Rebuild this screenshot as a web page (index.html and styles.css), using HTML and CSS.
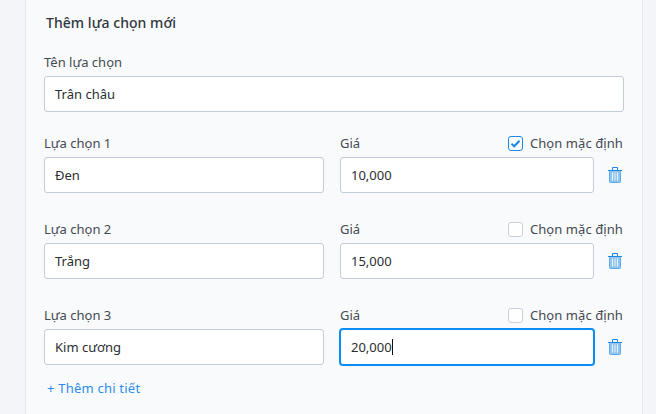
FILE: index.html
```html
<!DOCTYPE html>
<html lang="vi">
<head>
<meta charset="utf-8">
<title>Thêm lựa chọn mới</title>
<link rel="stylesheet" href="styles.css">
</head>
<body>
<main class="panel">
  <h2 class="title">Thêm lựa chọn mới</h2>
  <div class="field name-field">
    <div class="label-row"><span class="label">Tên lựa chọn</span></div>
    <div class="input">Trân châu</div>
  </div>

  <div class="option-row">
    <div class="field opt"><div class="label-row"><span class="label">Lựa chọn 1</span></div><div class="input">Đen</div></div>
    <div class="field price">
      <div class="label-row"><span class="label">Giá</span>
        <span class="default"><span class="box checked"><svg viewBox="0 0 15 15" width="15" height="15"><path d="M3.500 7.800 6.200 10.300 11.500 4.800" fill="none" stroke="#1b87e6" stroke-width="2"/></svg></span>Chọn mặc định</span></div>
      <div class="input">10,000</div>
    </div>
    <svg class="trash" viewBox="0 0 14 16" width="14" height="16"><use href="#trash"/></svg>
  </div>

  <div class="option-row">
    <div class="field opt"><div class="label-row"><span class="label">Lựa chọn 2</span></div><div class="input">Trắng</div></div>
    <div class="field price">
      <div class="label-row"><span class="label">Giá</span>
        <span class="default"><span class="box"></span>Chọn mặc định</span></div>
      <div class="input">15,000</div>
    </div>
    <svg class="trash" viewBox="0 0 14 16" width="14" height="16"><use href="#trash"/></svg>
  </div>

  <div class="option-row">
    <div class="field opt"><div class="label-row"><span class="label">Lựa chọn 3</span></div><div class="input">Kim cương</div></div>
    <div class="field price">
      <div class="label-row"><span class="label">Giá</span>
        <span class="default"><span class="box"></span>Chọn mặc định</span></div>
      <div class="input focused">20,000<span class="caret"></span></div>
    </div>
    <svg class="trash" viewBox="0 0 14 16" width="14" height="16"><use href="#trash"/></svg>
  </div>

  <a class="add" href="#">+ Thêm chi tiết</a>
</main>
<svg class="defs" width="0" height="0">
  <symbol id="trash" viewBox="0 0 14 16">
    <rect x="1.500" y="3.500" width="11" height="12" rx="1" fill="#8fc5f0" stroke="#5aa9ea"/>
    <path d="M0 3.500H14" stroke="#1b87e6"/>
    <path d="M4.500 3V.5H9.500V3" fill="none" stroke="#1b87e6"/>
    <path d="M4.500 5.500V13.500M7 5.500V13.500M9.500 5.500V13.500" stroke="#e6f2fc"/>
  </symbol>
</svg>
</body>
</html>
```
FILE: styles.css
```css
* { box-sizing: border-box; }
html, body { margin: 0; height: 100%; }
body {
  background: #f3f5f8;
  font-family: "Noto Sans", "Open Sans", sans-serif;
  font-size: 13px;
  color: #444a52;
  overflow: hidden;
}
.panel {
  margin-left: 25px;
  width: 618px;
  height: 414px;
  background: #f9fafb;
  border-left: 1px solid #e5e8ee;
  border-right: 1px solid #e5e8ee;
  padding: 14px 18px 0 18px;
}
.title {
  margin: 0 0 0 2px;
  font-size: 14px;
  line-height: 18px;
  font-weight: 500;
  letter-spacing: .05px;
  color: #2f3640;
}
.name-field { margin-top: 19px; }
.label-row {
  display: flex;
  justify-content: space-between;
  align-items: center;
  height: 22px;
  margin-bottom: 3px;
}
.label { line-height: 22px; }
.input {
  height: 36px;
  border: 1px solid #c3ccdb;
  border-radius: 3px;
  background: #fff;
  padding: 0 10px;
  line-height: 34px;
  color: #2a2e33;
  display: flex;
  align-items: center;
}
.input.focused {
  border-color: #0a8cf5;
  box-shadow: 0 0 0 1px #0a8cf5;
}
.caret {
  display: inline-block;
  width: 1px;
  height: 16px;
  background: #111;
}
.option-row {
  display: flex;
  align-items: flex-end;
  margin-top: 20px;
  height: 61px;
}
.option-row + .option-row { margin-top: 25px; }
.opt { width: 280px; margin-right: 16px; }
.price { width: 254px; }
.default {
  display: inline-flex;
  align-items: center;
  gap: 7px;
  margin-right: -29px;
  letter-spacing: .08px;
}
.box {
  display: block;
  width: 15px;
  height: 15px;
  border: 1px solid #c9d0dc;
  border-radius: 3px;
  background: #fff;
}
.box.checked { border-color: #1b87e6; }
.box.checked svg { display: block; margin: -1px; }
.trash { margin: 0 0 10px 14px; flex: none; }
.add {
  display: block;
  margin: 13px 0 0 3px;
  color: #2b8cf0;
  text-decoration: none;
  line-height: 20px;
  letter-spacing: .22px;
}
.defs { position: absolute; }
```
